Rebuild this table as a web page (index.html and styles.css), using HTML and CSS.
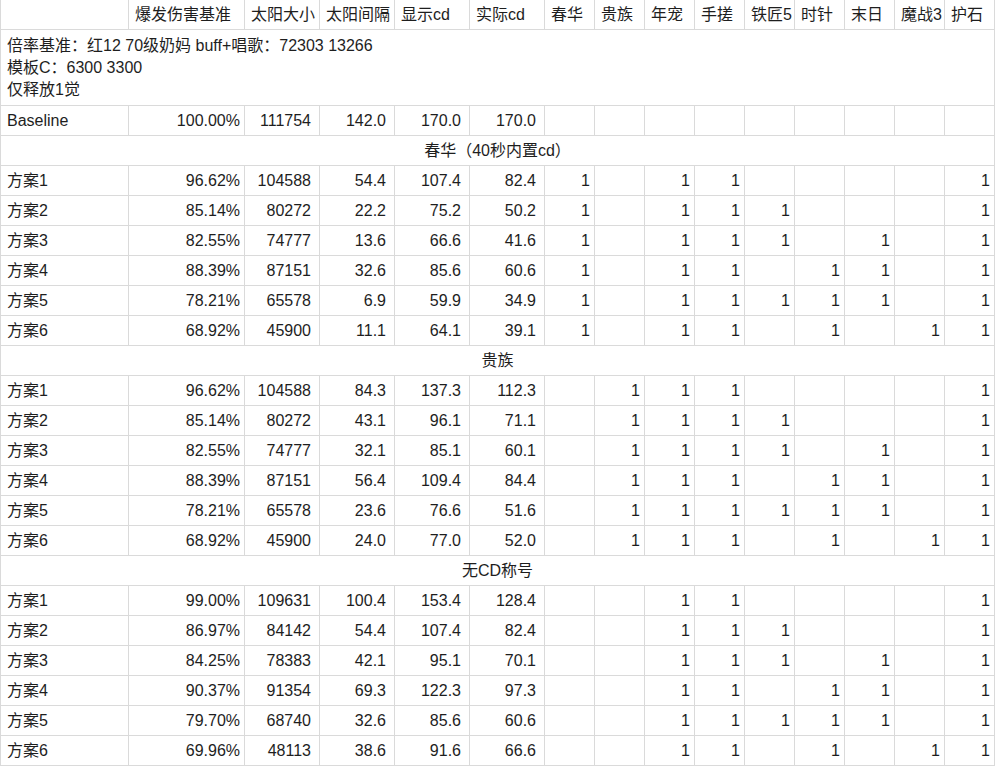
FILE: index.html
```html
<!DOCTYPE html>
<html lang="zh-CN">
<head>
<meta charset="utf-8">
<title>爆发伤害基准</title>
<link rel="stylesheet" href="styles.css">
</head>
<body>
<table class="sheet">
  <colgroup>
    <col class="c-name"><col class="c-pct"><col class="c-mid"><col class="c-mid"><col class="c-mid"><col class="c-mid">
    <col class="c-s"><col class="c-s"><col class="c-s"><col class="c-s"><col class="c-s"><col class="c-s"><col class="c-s"><col class="c-s"><col class="c-s">
  </colgroup>
  <thead>
    <tr>
      <th></th><th>爆发伤害基准</th><th>太阳大小</th><th>太阳间隔</th><th>显示cd</th><th>实际cd</th>
      <th>春华</th><th>贵族</th><th>年宠</th><th>手搓</th><th>铁匠5</th><th>时针</th><th>末日</th><th>魔战3</th><th>护石</th>
    </tr>
  </thead>
  <tbody>
    <tr class="note-row"><td class="note" colspan="15">倍率基准：红12 70级奶妈 buff+唱歌：72303 13266<br>模板C：6300 3300<br>仅释放1觉</td></tr>
    <tr><td>Baseline</td><td class="num">100.00%</td><td class="num sp">111754</td><td class="num sp">142.0</td><td class="num sp">170.0</td><td class="num sp">170.0</td><td></td><td></td><td></td><td></td><td></td><td></td><td></td><td></td><td></td></tr>

    <tr><td class="grp" colspan="15">春华（40秒内置cd）</td></tr>
    <tr><td>方案1</td><td class="num">96.62%</td><td class="num sp">104588</td><td class="num sp">54.4</td><td class="num sp">107.4</td><td class="num sp">82.4</td><td class="num">1</td><td></td><td class="num">1</td><td class="num">1</td><td></td><td></td><td></td><td></td><td class="num">1</td></tr>
    <tr><td>方案2</td><td class="num">85.14%</td><td class="num sp">80272</td><td class="num sp">22.2</td><td class="num sp">75.2</td><td class="num sp">50.2</td><td class="num">1</td><td></td><td class="num">1</td><td class="num">1</td><td class="num">1</td><td></td><td></td><td></td><td class="num">1</td></tr>
    <tr><td>方案3</td><td class="num">82.55%</td><td class="num sp">74777</td><td class="num sp">13.6</td><td class="num sp">66.6</td><td class="num sp">41.6</td><td class="num">1</td><td></td><td class="num">1</td><td class="num">1</td><td class="num">1</td><td></td><td class="num">1</td><td></td><td class="num">1</td></tr>
    <tr><td>方案4</td><td class="num">88.39%</td><td class="num sp">87151</td><td class="num sp">32.6</td><td class="num sp">85.6</td><td class="num sp">60.6</td><td class="num">1</td><td></td><td class="num">1</td><td class="num">1</td><td></td><td class="num">1</td><td class="num">1</td><td></td><td class="num">1</td></tr>
    <tr><td>方案5</td><td class="num">78.21%</td><td class="num sp">65578</td><td class="num sp">6.9</td><td class="num sp">59.9</td><td class="num sp">34.9</td><td class="num">1</td><td></td><td class="num">1</td><td class="num">1</td><td class="num">1</td><td class="num">1</td><td class="num">1</td><td></td><td class="num">1</td></tr>
    <tr><td>方案6</td><td class="num">68.92%</td><td class="num sp">45900</td><td class="num sp">11.1</td><td class="num sp">64.1</td><td class="num sp">39.1</td><td class="num">1</td><td></td><td class="num">1</td><td class="num">1</td><td></td><td class="num">1</td><td></td><td class="num">1</td><td class="num">1</td></tr>

    <tr><td class="grp" colspan="15">贵族</td></tr>
    <tr><td>方案1</td><td class="num">96.62%</td><td class="num sp">104588</td><td class="num sp">84.3</td><td class="num sp">137.3</td><td class="num sp">112.3</td><td></td><td class="num">1</td><td class="num">1</td><td class="num">1</td><td></td><td></td><td></td><td></td><td class="num">1</td></tr>
    <tr><td>方案2</td><td class="num">85.14%</td><td class="num sp">80272</td><td class="num sp">43.1</td><td class="num sp">96.1</td><td class="num sp">71.1</td><td></td><td class="num">1</td><td class="num">1</td><td class="num">1</td><td class="num">1</td><td></td><td></td><td></td><td class="num">1</td></tr>
    <tr><td>方案3</td><td class="num">82.55%</td><td class="num sp">74777</td><td class="num sp">32.1</td><td class="num sp">85.1</td><td class="num sp">60.1</td><td></td><td class="num">1</td><td class="num">1</td><td class="num">1</td><td class="num">1</td><td></td><td class="num">1</td><td></td><td class="num">1</td></tr>
    <tr><td>方案4</td><td class="num">88.39%</td><td class="num sp">87151</td><td class="num sp">56.4</td><td class="num sp">109.4</td><td class="num sp">84.4</td><td></td><td class="num">1</td><td class="num">1</td><td class="num">1</td><td></td><td class="num">1</td><td class="num">1</td><td></td><td class="num">1</td></tr>
    <tr><td>方案5</td><td class="num">78.21%</td><td class="num sp">65578</td><td class="num sp">23.6</td><td class="num sp">76.6</td><td class="num sp">51.6</td><td></td><td class="num">1</td><td class="num">1</td><td class="num">1</td><td class="num">1</td><td class="num">1</td><td class="num">1</td><td></td><td class="num">1</td></tr>
    <tr><td>方案6</td><td class="num">68.92%</td><td class="num sp">45900</td><td class="num sp">24.0</td><td class="num sp">77.0</td><td class="num sp">52.0</td><td></td><td class="num">1</td><td class="num">1</td><td class="num">1</td><td></td><td class="num">1</td><td></td><td class="num">1</td><td class="num">1</td></tr>

    <tr><td class="grp" colspan="15">无CD称号</td></tr>
    <tr><td>方案1</td><td class="num">99.00%</td><td class="num sp">109631</td><td class="num sp">100.4</td><td class="num sp">153.4</td><td class="num sp">128.4</td><td></td><td></td><td class="num">1</td><td class="num">1</td><td></td><td></td><td></td><td></td><td class="num">1</td></tr>
    <tr><td>方案2</td><td class="num">86.97%</td><td class="num sp">84142</td><td class="num sp">54.4</td><td class="num sp">107.4</td><td class="num sp">82.4</td><td></td><td></td><td class="num">1</td><td class="num">1</td><td class="num">1</td><td></td><td></td><td></td><td class="num">1</td></tr>
    <tr><td>方案3</td><td class="num">84.25%</td><td class="num sp">78383</td><td class="num sp">42.1</td><td class="num sp">95.1</td><td class="num sp">70.1</td><td></td><td></td><td class="num">1</td><td class="num">1</td><td class="num">1</td><td></td><td class="num">1</td><td></td><td class="num">1</td></tr>
    <tr><td>方案4</td><td class="num">90.37%</td><td class="num sp">91354</td><td class="num sp">69.3</td><td class="num sp">122.3</td><td class="num sp">97.3</td><td></td><td></td><td class="num">1</td><td class="num">1</td><td></td><td class="num">1</td><td class="num">1</td><td></td><td class="num">1</td></tr>
    <tr><td>方案5</td><td class="num">79.70%</td><td class="num sp">68740</td><td class="num sp">32.6</td><td class="num sp">85.6</td><td class="num sp">60.6</td><td></td><td></td><td class="num">1</td><td class="num">1</td><td class="num">1</td><td class="num">1</td><td class="num">1</td><td></td><td class="num">1</td></tr>
    <tr><td>方案6</td><td class="num">69.96%</td><td class="num sp">48113</td><td class="num sp">38.6</td><td class="num sp">91.6</td><td class="num sp">66.6</td><td></td><td></td><td class="num">1</td><td class="num">1</td><td></td><td class="num">1</td><td></td><td class="num">1</td><td class="num">1</td></tr>
  </tbody>
</table>
</body>
</html>
```

FILE: styles.css
```css
html, body {
  margin: 0;
  padding: 0;
  background: #ffffff;
}

body {
  font-family: "Liberation Sans", Arial, "Noto Sans CJK SC", sans-serif;
  font-size: 16px;
  color: #1e1e1e;
}

.sheet {
  border-collapse: separate;
  border-spacing: 0;
  table-layout: fixed;
  width: 995px;
  border-left: 1px solid #dadada;
}

.c-name { width: 128px; }
.c-pct  { width: 116px; }
.c-mid  { width: 75px; }
.c-s    { width: 50px; }

.sheet th,
.sheet td {
  box-sizing: border-box;
  height: 30px;
  padding: 0 4px 0 6px;
  border-right: 1px solid #dadada;
  border-bottom: 1px solid #dadada;
  font-weight: normal;
  text-align: left;
  vertical-align: middle;
  line-height: 20px;
  white-space: nowrap;
  overflow: hidden;
}

.sheet .num {
  text-align: right;
  padding-right: 4px;
}

.sheet .num.sp {
  padding-right: 8px;
}

.sheet .grp {
  text-align: center;
  padding: 0;
}

.note-row .note {
  height: 76px;
  line-height: 22px;
  padding-top: 1px;
}
```
